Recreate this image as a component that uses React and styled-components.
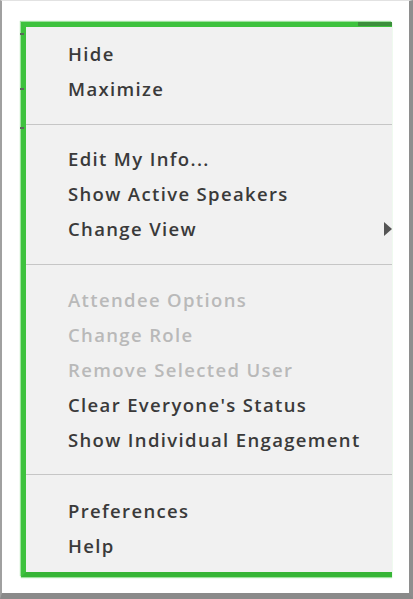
import React from 'react'
import styled, { createGlobalStyle } from 'styled-components'

const GlobalStyle = createGlobalStyle`
  html, body {
    margin: 0;
    padding: 0;
    background: #ffffff;
  }
`

const Frame = styled.div`
  box-sizing: border-box;
  width: 413px;
  height: 599px;
  background: #ffffff;
  border-top: 1px solid #e2e2e2;
  border-left: 2px solid #a0a0a0;
  border-right: 4px solid #8e8e8e;
  border-bottom: 6px solid #8a8a8a;
  padding: 21px 17px 16px 19px;
  display: flex;
`

const Panel = styled.div`
  position: relative;
  flex: 1;
  display: flex;
  flex-direction: column;
  background: #f1f1f1;
  border-left: 5px solid #3ec23e;
  border-top: 5px solid #3ec23e;
  border-bottom: 5px solid #36b536;
  box-shadow: -1px -1px 1px #9fe29f, 0 1px 1px #9fe29f;
  font-family: 'Open Sans', 'Liberation Sans', sans-serif;

  &::after {
    content: '';
    position: absolute;
    top: -5px;
    right: 0;
    width: 34px;
    height: 4px;
    background: #3b8f3b;
  }
`

const Tick = styled.span`
  position: absolute;
  left: -6px;
  top: ${(p) => p.$top}px;
  width: 4px;
  height: 2px;
  background: #5a6a5a;
`

const Section = styled.div`
  display: flex;
  flex-direction: column;
  padding: ${(p) => p.$pad};
  & + & {
    border-top: 1px solid #c6c6c6;
  }
`

const Item = styled.div`
  display: flex;
  align-items: center;
  justify-content: space-between;
  height: 35px;
  padding-left: 42px;
  font-size: 18.5px;
  font-weight: 600;
  letter-spacing: 1.35px;
  color: ${(p) => (p.$disabled ? '#b9b9b9' : '#3a3a3a')};
  white-space: nowrap;
`

const Arrow = styled.span`
  width: 0;
  height: 0;
  border-left: 8px solid #555555;
  border-top: 7px solid transparent;
  border-bottom: 7px solid transparent;
`

const sections = [
  { pad: '9px 0 18px', items: [{ label: 'Hide' }, { label: 'Maximize' }] },
  {
    pad: '16px 0 18px',
    items: [
      { label: 'Edit My Info...' },
      { label: 'Show Active Speakers' },
      { label: 'Change View', sub: true },
    ],
  },
  {
    pad: '17px 0 17px',
    items: [
      { label: 'Attendee Options', disabled: true },
      { label: 'Change Role', disabled: true },
      { label: 'Remove Selected User', disabled: true },
      { label: "Clear Everyone's Status" },
      { label: 'Show Individual Engagement' },
    ],
  },
  { pad: '18px 0 9px', items: [{ label: 'Preferences' }, { label: 'Help' }] },
]

export default function App() {
  return (
    <>
      <GlobalStyle />
      <Frame>
        <Panel>
          <Tick $top={6} />
          <Tick $top={61} />
          <Tick $top={100} />
          {sections.map((s, i) => (
            <Section key={i} $pad={s.pad}>
              {s.items.map((it) => (
                <Item key={it.label} $disabled={it.disabled}>
                  {it.label}
                  {it.sub && <Arrow />}
                </Item>
              ))}
            </Section>
          ))}
        </Panel>
      </Frame>
    </>
  )
}
